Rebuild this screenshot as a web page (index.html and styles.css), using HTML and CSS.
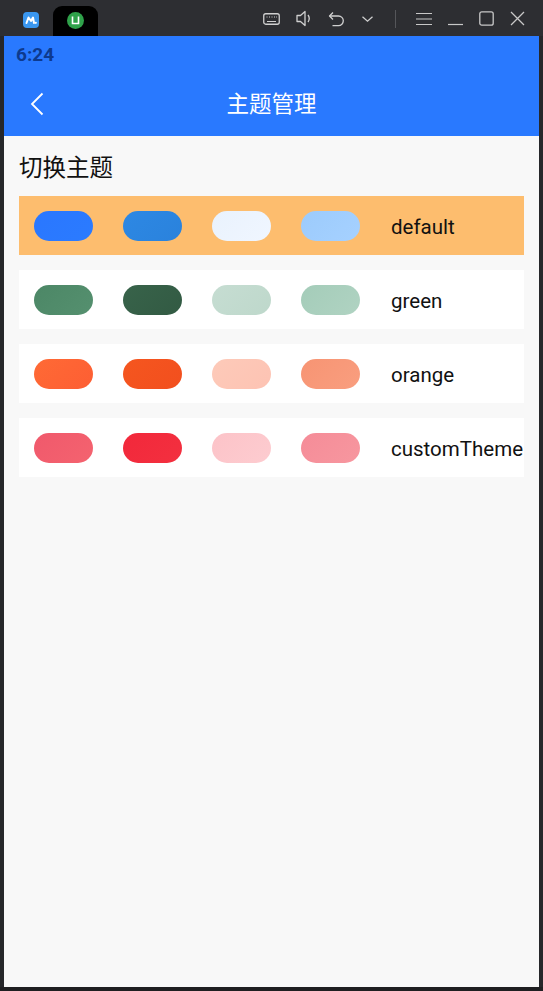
FILE: index.html
```html
<!DOCTYPE html>
<html lang="zh">
<head>
<meta charset="utf-8">
<title>主题管理</title>
<link rel="stylesheet" href="styles.css">
</head>
<body>
<div class="chrome">
  <div class="tabs">
    <div class="tab">
      <svg width="16" height="16" viewBox="0 0 16 16"><rect x="0" y="0" width="16" height="16" rx="4" fill="#3a97f0"/><path d="M3.5 11 L5.5 5.5 L8 9 L10 5.5 L11 11" fill="none" stroke="#fff" stroke-width="2" stroke-linejoin="round" stroke-linecap="round"/><circle cx="12.8" cy="10.8" r="1.1" fill="#fff"/></svg>
    </div>
    <div class="tab active">
      <svg width="17" height="17" viewBox="0 0 17 17"><circle cx="8.5" cy="8.5" r="8.5" fill="#2fa24a"/><path d="M5.5 4.5 V11.5 H11.5 V4.5" fill="none" stroke="#fff" stroke-width="1.6"/></svg>
    </div>
  </div>
  <div class="tools">
    <svg class="ic" width="17" height="14" viewBox="0 0 17 14"><rect x="0.75" y="1.75" width="15.5" height="10.5" rx="2" fill="none" stroke="#d0d0d0" stroke-width="1.3"/><path d="M3.5 5h1M6 5h1M8.5 5h1M11 5h1M13 5h0.8M4 9.5h9" stroke="#d0d0d0" stroke-width="1.2"/></svg>
    <svg class="ic" width="16" height="17" viewBox="0 0 16 17"><path d="M1 5.5 H4.5 L9 1.5 V15.5 L4.5 11.5 H1 Z" fill="none" stroke="#d0d0d0" stroke-width="1.3" stroke-linejoin="round"/><path d="M12 5 Q14.5 8.5 12 12" fill="none" stroke="#d0d0d0" stroke-width="1.3"/></svg>
    <svg class="ic" width="17" height="16" viewBox="0 0 17 16"><path d="M5 1.5 L1.5 5 L5 8.5" fill="none" stroke="#d0d0d0" stroke-width="1.3" stroke-linejoin="round"/><path d="M1.8 5 H10.5 A4.8 4.8 0 0 1 10.5 14.6 H4.5" fill="none" stroke="#d0d0d0" stroke-width="1.3"/></svg>
    <svg class="ic" width="13" height="8" viewBox="0 0 13 8"><path d="M1.5 1.8 L6.5 6.2 L11.5 1.8" fill="none" stroke="#d0d0d0" stroke-width="1.3"/></svg>
    <span class="sep"></span>
    <svg class="ic" width="16" height="14" viewBox="0 0 16 14"><path d="M0 1.5H16M0 7H16M0 12.5H16" stroke="#c8c8c8" stroke-width="1.2"/></svg>
    <svg class="ic" width="15" height="14" viewBox="0 0 15 14"><path d="M0 12.5H15" stroke="#c8c8c8" stroke-width="1.2"/></svg>
    <svg class="ic" width="15" height="15" viewBox="0 0 15 15"><rect x="0.8" y="0.8" width="13.4" height="13.4" rx="2" fill="none" stroke="#c8c8c8" stroke-width="1.3"/></svg>
    <svg class="ic" width="15" height="15" viewBox="0 0 15 15"><path d="M1 1L14 14M14 1L1 14" stroke="#c8c8c8" stroke-width="1.3"/></svg>
  </div>
</div>
<div class="frame">
  <div class="edge"></div>
  <div class="screen">
    <header class="header">
      <div class="status">6:24</div>
      <div class="nav">
        <svg class="back" width="14" height="24" viewBox="0 0 14 24"><path d="M12.5 1.5 L2 12 L12.5 22.5" fill="none" stroke="#fff" stroke-width="1.8"/></svg>
        <div class="title">主题管理</div>
      </div>
    </header>
    <main class="content">
      <div class="section-title">切换主题</div>
      <div class="list">
        <div class="row selected">
          <span class="pill p-d1"></span><span class="pill p-d2"></span><span class="pill p-d3"></span><span class="pill p-d4"></span>
          <span class="name">default</span>
        </div>
        <div class="row">
          <span class="pill p-g1"></span><span class="pill p-g2"></span><span class="pill p-g3"></span><span class="pill p-g4"></span>
          <span class="name">green</span>
        </div>
        <div class="row">
          <span class="pill p-o1"></span><span class="pill p-o2"></span><span class="pill p-o3"></span><span class="pill p-o4"></span>
          <span class="name">orange</span>
        </div>
        <div class="row">
          <span class="pill p-c1"></span><span class="pill p-c2"></span><span class="pill p-c3"></span><span class="pill p-c4"></span>
          <span class="name">customTheme</span>
        </div>
      </div>
    </main>
  </div>
  <div class="edge"></div>
</div>
</body>
</html>
```

FILE: styles.css
```css
html, body {
  margin: 0;
  padding: 0;
}
body {
  width: 543px;
  height: 991px;
  background: #1f1f21;
  font-family: Roboto, "Noto Sans CJK SC", sans-serif;
  overflow: hidden;
}
.chrome {
  height: 36px;
  background: #2d2e32;
  display: flex;
  justify-content: space-between;
  align-items: stretch;
}
.tabs {
  display: flex;
  padding-left: 8px;
  padding-top: 6px;
}
.tab {
  width: 45px;
  display: flex;
  align-items: center;
  justify-content: center;
  border-radius: 9px 9px 0 0;
  padding-bottom: 2px;
}
.tab.active {
  background: #000;
}
.tools {
  display: flex;
  align-items: center;
  padding-right: 18px;
  gap: 16px;
  padding-top: 1px;
}
.ic {
  display: block;
}
.sep {
  width: 1px;
  height: 18px;
  background: #55565a;
  margin: 0 4px 0 5px;
}
.frame {
  display: flex;
  height: 951px;
}
.edge {
  width: 4px;
  background: #26272a;
}
.screen {
  width: 535px;
  display: flex;
  flex-direction: column;
  background: #f8f8f8;
}
.header {
  background: #2979ff;
  height: 100px;
}
.status {
  height: 36px;
  padding-left: 12px;
  font-size: 19px;
  font-weight: 700;
  line-height: 38px;
  color: #0d3a8e;
}
.nav {
  height: 64px;
  position: relative;
  display: flex;
  align-items: center;
  justify-content: center;
}
.back {
  position: absolute;
  left: 26px;
  top: 20px;
}
.title {
  color: #fff;
  font-size: 22.5px;
  font-family: "Noto Sans CJK SC", sans-serif;
  margin-top: -5px;
}
.content {
  flex: 1;
  padding: 0 15px;
}
.section-title {
  font-family: "Noto Sans CJK SC", sans-serif;
  font-size: 23.5px;
  line-height: 32px;
  color: #111;
  margin-top: 14px;
  margin-bottom: 14px;
  padding-left: 0;
}
.list {
  display: flex;
  flex-direction: column;
  gap: 15px;
}
.row {
  height: 59px;
  background: #fff;
  display: flex;
  align-items: center;
  padding-left: 15px;
  gap: 30px;
  overflow: hidden;
  white-space: nowrap;
}
.row.selected {
  background: #fdbd6e;
}
.pill {
  width: 59px;
  height: 30px;
  border-radius: 15px;
  flex: none;
}
.name {
  font-size: 20.5px;
  color: #111;
  margin-left: 1px;
  padding-top: 2px;
}
.p-d1 { background: linear-gradient(135deg, #2a77ff, #2b7bff); }
.p-d2 { background: linear-gradient(135deg, #2d88e4, #2a82dc); }
.p-d3 { background: linear-gradient(135deg, #e9f2fd, #f0f6ff); }
.p-d4 { background: linear-gradient(135deg, #9ccbfc, #a6d1ff); }
.p-g1 { background: linear-gradient(135deg, #4c8766, #55906f); }
.p-g2 { background: linear-gradient(135deg, #38634a, #325a43); }
.p-g3 { background: linear-gradient(135deg, #c6ddd2, #bed8cb); }
.p-g4 { background: linear-gradient(135deg, #a4ccb9, #b0d3c2); }
.p-o1 { background: linear-gradient(135deg, #ff6a35, #fd5e33); }
.p-o2 { background: linear-gradient(135deg, #f5561f, #f24f1e); }
.p-o3 { background: linear-gradient(135deg, #fdcab9, #fdc3b3); }
.p-o4 { background: linear-gradient(135deg, #f79473, #f99e7f); }
.p-c1 { background: linear-gradient(135deg, #f0596c, #f4636f); }
.p-c2 { background: linear-gradient(135deg, #f2283b, #f3303f); }
.p-c3 { background: linear-gradient(135deg, #fcc3c8, #fdccd0); }
.p-c4 { background: linear-gradient(135deg, #f58c98, #f7979f); }
```
